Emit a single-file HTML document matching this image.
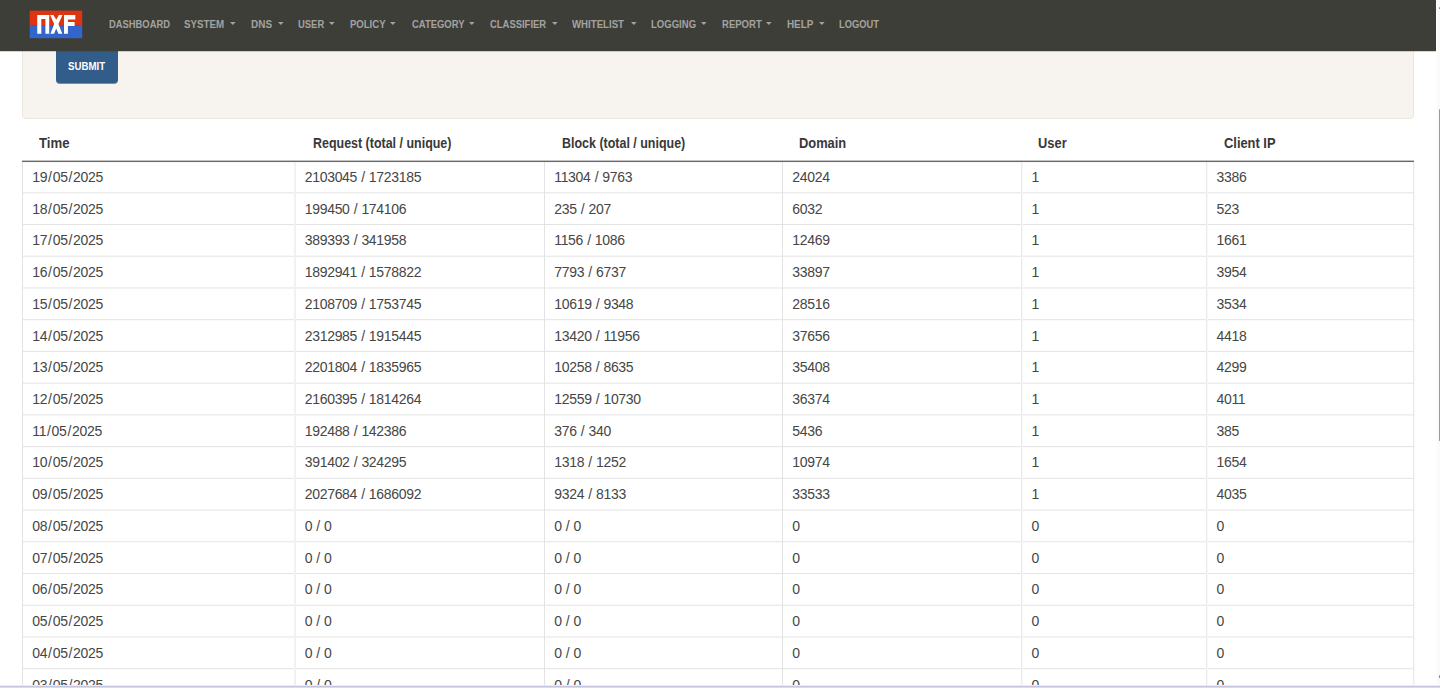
<!DOCTYPE html>
<html><head><meta charset="utf-8">
<style>
html,body{margin:0;padding:0;width:1440px;height:688px;overflow:hidden;background:#fff;}
body{position:relative;font-family:"Liberation Sans",sans-serif;}
.a{position:absolute;white-space:nowrap;}
.l{position:absolute;}
#nav{position:absolute;left:0;top:0;width:1436px;height:51px;background:#3e3e39;}
.ni{position:absolute;top:18.7px;font-size:10.2px;font-weight:bold;color:#a3a3a0;line-height:12px;transform-origin:0 0;}
.card{position:absolute;left:22px;top:0px;width:1392px;height:118.5px;background:#f7f4ef;border:1px solid #ebe6de;border-radius:4px;box-sizing:border-box;}
.btn{position:absolute;left:56px;top:0px;width:62px;height:83px;background:#325c89;border-radius:4px;box-shadow:0 1px 0 rgba(50,92,137,0.68);}
.btxt{position:absolute;font-size:10.5px;font-weight:bold;color:#fff;line-height:12px;transform-origin:0 0;}
.th{position:absolute;font-size:14px;font-weight:bold;color:#383838;line-height:16px;transform-origin:0 0;}
.td{position:absolute;font-size:14px;color:#464646;line-height:16px;letter-spacing:-0.3px;}
.s1{margin:0 0.95px;}
.s2{margin:0 0.5px;}
</style></head><body>

<div class="card"></div>
<div class="btn"></div>
<div class="a btxt" style="left:67.5px;top:60.0px;transform:scaleX(0.92)">SUBMIT</div>
<div class="a th" style="left:39px;top:135px;transform:scaleX(0.94)">Time</div>
<div class="a th" style="left:312.5px;top:135px;transform:scaleX(0.89)">Request (total / unique)</div>
<div class="a th" style="left:562px;top:135px;transform:scaleX(0.89)">Block (total / unique)</div>
<div class="a th" style="left:799.2px;top:135px;transform:scaleX(0.92)">Domain</div>
<div class="a th" style="left:1038.2px;top:135px;transform:scaleX(0.92)">User</div>
<div class="a th" style="left:1224.2px;top:135px;transform:scaleX(0.92)">Client IP</div>
<div class="l" style="left:22px;top:160px;width:1392px;height:1px;background:#c2c2c2"></div>
<div class="l" style="left:22px;top:161px;width:1392px;height:1px;background:#6b6b6b"></div>
<div class="l" style="left:22px;top:162px;width:1392px;height:1px;background:#f6f6f6"></div>
<div class="l" style="left:22px;top:192px;width:1392px;height:1px;background:#ebebeb"></div>
<div class="l" style="left:22px;top:193px;width:1392px;height:1px;background:#f7f7f7"></div>
<div class="l" style="left:22px;top:224px;width:1392px;height:1px;background:#e3e3e3"></div>
<div class="l" style="left:22px;top:255px;width:1392px;height:1px;background:#f7f7f7"></div>
<div class="l" style="left:22px;top:256px;width:1392px;height:1px;background:#ebebeb"></div>
<div class="l" style="left:22px;top:287px;width:1392px;height:1px;background:#f0f0f0"></div>
<div class="l" style="left:22px;top:288px;width:1392px;height:1px;background:#f2f2f2"></div>
<div class="l" style="left:22px;top:319px;width:1392px;height:1px;background:#e8e8e8"></div>
<div class="l" style="left:22px;top:320px;width:1392px;height:1px;background:#fafafa"></div>
<div class="l" style="left:22px;top:350px;width:1392px;height:1px;background:#fdfdfd"></div>
<div class="l" style="left:22px;top:351px;width:1392px;height:1px;background:#e5e5e5"></div>
<div class="l" style="left:22px;top:382px;width:1392px;height:1px;background:#f5f5f5"></div>
<div class="l" style="left:22px;top:383px;width:1392px;height:1px;background:#ededed"></div>
<div class="l" style="left:22px;top:414px;width:1392px;height:1px;background:#eeeeee"></div>
<div class="l" style="left:22px;top:415px;width:1392px;height:1px;background:#f4f4f4"></div>
<div class="l" style="left:22px;top:446px;width:1392px;height:1px;background:#e6e6e6"></div>
<div class="l" style="left:22px;top:447px;width:1392px;height:1px;background:#fcfcfc"></div>
<div class="l" style="left:22px;top:477px;width:1392px;height:1px;background:#fbfbfb"></div>
<div class="l" style="left:22px;top:478px;width:1392px;height:1px;background:#e7e7e7"></div>
<div class="l" style="left:22px;top:509px;width:1392px;height:1px;background:#f3f3f3"></div>
<div class="l" style="left:22px;top:510px;width:1392px;height:1px;background:#efefef"></div>
<div class="l" style="left:22px;top:541px;width:1392px;height:1px;background:#ebebeb"></div>
<div class="l" style="left:22px;top:542px;width:1392px;height:1px;background:#f7f7f7"></div>
<div class="l" style="left:22px;top:573px;width:1392px;height:1px;background:#e4e4e4"></div>
<div class="l" style="left:22px;top:574px;width:1392px;height:1px;background:#fefefe"></div>
<div class="l" style="left:22px;top:604px;width:1392px;height:1px;background:#f8f8f8"></div>
<div class="l" style="left:22px;top:605px;width:1392px;height:1px;background:#eaeaea"></div>
<div class="l" style="left:22px;top:636px;width:1392px;height:1px;background:#f1f1f1"></div>
<div class="l" style="left:22px;top:637px;width:1392px;height:1px;background:#f1f1f1"></div>
<div class="l" style="left:22px;top:668px;width:1392px;height:1px;background:#e9e9e9"></div>
<div class="l" style="left:22px;top:669px;width:1392px;height:1px;background:#f9f9f9"></div>
<div class="l" style="left:22px;top:699px;width:1392px;height:1px;background:#fefefe"></div>
<div class="l" style="left:22px;top:700px;width:1392px;height:1px;background:#e4e4e4"></div>
<div class="l" style="left:22px;top:162px;width:1px;height:526px;background:#e3e3e3"></div>
<div class="l" style="left:294px;top:162px;width:1px;height:526px;background:#f1f1f1"></div>
<div class="l" style="left:295px;top:162px;width:1px;height:526px;background:#f1f1f1"></div>
<div class="l" style="left:544px;top:162px;width:1px;height:526px;background:#e3e3e3"></div>
<div class="l" style="left:782px;top:162px;width:1px;height:526px;background:#e3e3e3"></div>
<div class="l" style="left:1021px;top:162px;width:1px;height:526px;background:#ebebeb"></div>
<div class="l" style="left:1022px;top:162px;width:1px;height:526px;background:#f7f7f7"></div>
<div class="l" style="left:1206px;top:162px;width:1px;height:526px;background:#eaeaea"></div>
<div class="l" style="left:1207px;top:162px;width:1px;height:526px;background:#f8f8f8"></div>
<div class="l" style="left:1413px;top:162px;width:1px;height:526px;background:#eaeaea"></div>
<div class="l" style="left:1414px;top:162px;width:1px;height:526px;background:#f8f8f8"></div>
<div class="a td" style="left:32.20px;top:168.87px">19<span class="s1">/</span>05<span class="s1">/</span>2025</div>
<div class="a td" style="left:304.70px;top:168.87px">2103045 <span class="s2">/</span> 1723185</div>
<div class="a td" style="left:554.20px;top:168.87px">11304 <span class="s2">/</span> 9763</div>
<div class="a td" style="left:792.20px;top:168.87px">24024</div>
<div class="a td" style="left:1031.50px;top:168.87px">1</div>
<div class="a td" style="left:1216.45px;top:168.87px">3386</div>
<div class="a td" style="left:32.20px;top:200.60px">18<span class="s1">/</span>05<span class="s1">/</span>2025</div>
<div class="a td" style="left:304.70px;top:200.60px">199450 <span class="s2">/</span> 174106</div>
<div class="a td" style="left:554.20px;top:200.60px">235 <span class="s2">/</span> 207</div>
<div class="a td" style="left:792.20px;top:200.60px">6032</div>
<div class="a td" style="left:1031.50px;top:200.60px">1</div>
<div class="a td" style="left:1216.45px;top:200.60px">523</div>
<div class="a td" style="left:32.20px;top:232.33px">17<span class="s1">/</span>05<span class="s1">/</span>2025</div>
<div class="a td" style="left:304.70px;top:232.33px">389393 <span class="s2">/</span> 341958</div>
<div class="a td" style="left:554.20px;top:232.33px">1156 <span class="s2">/</span> 1086</div>
<div class="a td" style="left:792.20px;top:232.33px">12469</div>
<div class="a td" style="left:1031.50px;top:232.33px">1</div>
<div class="a td" style="left:1216.45px;top:232.33px">1661</div>
<div class="a td" style="left:32.20px;top:264.06px">16<span class="s1">/</span>05<span class="s1">/</span>2025</div>
<div class="a td" style="left:304.70px;top:264.06px">1892941 <span class="s2">/</span> 1578822</div>
<div class="a td" style="left:554.20px;top:264.06px">7793 <span class="s2">/</span> 6737</div>
<div class="a td" style="left:792.20px;top:264.06px">33897</div>
<div class="a td" style="left:1031.50px;top:264.06px">1</div>
<div class="a td" style="left:1216.45px;top:264.06px">3954</div>
<div class="a td" style="left:32.20px;top:295.79px">15<span class="s1">/</span>05<span class="s1">/</span>2025</div>
<div class="a td" style="left:304.70px;top:295.79px">2108709 <span class="s2">/</span> 1753745</div>
<div class="a td" style="left:554.20px;top:295.79px">10619 <span class="s2">/</span> 9348</div>
<div class="a td" style="left:792.20px;top:295.79px">28516</div>
<div class="a td" style="left:1031.50px;top:295.79px">1</div>
<div class="a td" style="left:1216.45px;top:295.79px">3534</div>
<div class="a td" style="left:32.20px;top:327.52px">14<span class="s1">/</span>05<span class="s1">/</span>2025</div>
<div class="a td" style="left:304.70px;top:327.52px">2312985 <span class="s2">/</span> 1915445</div>
<div class="a td" style="left:554.20px;top:327.52px">13420 <span class="s2">/</span> 11956</div>
<div class="a td" style="left:792.20px;top:327.52px">37656</div>
<div class="a td" style="left:1031.50px;top:327.52px">1</div>
<div class="a td" style="left:1216.45px;top:327.52px">4418</div>
<div class="a td" style="left:32.20px;top:359.25px">13<span class="s1">/</span>05<span class="s1">/</span>2025</div>
<div class="a td" style="left:304.70px;top:359.25px">2201804 <span class="s2">/</span> 1835965</div>
<div class="a td" style="left:554.20px;top:359.25px">10258 <span class="s2">/</span> 8635</div>
<div class="a td" style="left:792.20px;top:359.25px">35408</div>
<div class="a td" style="left:1031.50px;top:359.25px">1</div>
<div class="a td" style="left:1216.45px;top:359.25px">4299</div>
<div class="a td" style="left:32.20px;top:390.98px">12<span class="s1">/</span>05<span class="s1">/</span>2025</div>
<div class="a td" style="left:304.70px;top:390.98px">2160395 <span class="s2">/</span> 1814264</div>
<div class="a td" style="left:554.20px;top:390.98px">12559 <span class="s2">/</span> 10730</div>
<div class="a td" style="left:792.20px;top:390.98px">36374</div>
<div class="a td" style="left:1031.50px;top:390.98px">1</div>
<div class="a td" style="left:1216.45px;top:390.98px">4011</div>
<div class="a td" style="left:32.20px;top:422.71px">11<span class="s1">/</span>05<span class="s1">/</span>2025</div>
<div class="a td" style="left:304.70px;top:422.71px">192488 <span class="s2">/</span> 142386</div>
<div class="a td" style="left:554.20px;top:422.71px">376 <span class="s2">/</span> 340</div>
<div class="a td" style="left:792.20px;top:422.71px">5436</div>
<div class="a td" style="left:1031.50px;top:422.71px">1</div>
<div class="a td" style="left:1216.45px;top:422.71px">385</div>
<div class="a td" style="left:32.20px;top:454.44px">10<span class="s1">/</span>05<span class="s1">/</span>2025</div>
<div class="a td" style="left:304.70px;top:454.44px">391402 <span class="s2">/</span> 324295</div>
<div class="a td" style="left:554.20px;top:454.44px">1318 <span class="s2">/</span> 1252</div>
<div class="a td" style="left:792.20px;top:454.44px">10974</div>
<div class="a td" style="left:1031.50px;top:454.44px">1</div>
<div class="a td" style="left:1216.45px;top:454.44px">1654</div>
<div class="a td" style="left:32.20px;top:486.17px">09<span class="s1">/</span>05<span class="s1">/</span>2025</div>
<div class="a td" style="left:304.70px;top:486.17px">2027684 <span class="s2">/</span> 1686092</div>
<div class="a td" style="left:554.20px;top:486.17px">9324 <span class="s2">/</span> 8133</div>
<div class="a td" style="left:792.20px;top:486.17px">33533</div>
<div class="a td" style="left:1031.50px;top:486.17px">1</div>
<div class="a td" style="left:1216.45px;top:486.17px">4035</div>
<div class="a td" style="left:32.20px;top:517.90px">08<span class="s1">/</span>05<span class="s1">/</span>2025</div>
<div class="a td" style="left:304.70px;top:517.90px">0 <span class="s2">/</span> 0</div>
<div class="a td" style="left:554.20px;top:517.90px">0 <span class="s2">/</span> 0</div>
<div class="a td" style="left:792.20px;top:517.90px">0</div>
<div class="a td" style="left:1031.50px;top:517.90px">0</div>
<div class="a td" style="left:1216.45px;top:517.90px">0</div>
<div class="a td" style="left:32.20px;top:549.63px">07<span class="s1">/</span>05<span class="s1">/</span>2025</div>
<div class="a td" style="left:304.70px;top:549.63px">0 <span class="s2">/</span> 0</div>
<div class="a td" style="left:554.20px;top:549.63px">0 <span class="s2">/</span> 0</div>
<div class="a td" style="left:792.20px;top:549.63px">0</div>
<div class="a td" style="left:1031.50px;top:549.63px">0</div>
<div class="a td" style="left:1216.45px;top:549.63px">0</div>
<div class="a td" style="left:32.20px;top:581.36px">06<span class="s1">/</span>05<span class="s1">/</span>2025</div>
<div class="a td" style="left:304.70px;top:581.36px">0 <span class="s2">/</span> 0</div>
<div class="a td" style="left:554.20px;top:581.36px">0 <span class="s2">/</span> 0</div>
<div class="a td" style="left:792.20px;top:581.36px">0</div>
<div class="a td" style="left:1031.50px;top:581.36px">0</div>
<div class="a td" style="left:1216.45px;top:581.36px">0</div>
<div class="a td" style="left:32.20px;top:613.09px">05<span class="s1">/</span>05<span class="s1">/</span>2025</div>
<div class="a td" style="left:304.70px;top:613.09px">0 <span class="s2">/</span> 0</div>
<div class="a td" style="left:554.20px;top:613.09px">0 <span class="s2">/</span> 0</div>
<div class="a td" style="left:792.20px;top:613.09px">0</div>
<div class="a td" style="left:1031.50px;top:613.09px">0</div>
<div class="a td" style="left:1216.45px;top:613.09px">0</div>
<div class="a td" style="left:32.20px;top:644.82px">04<span class="s1">/</span>05<span class="s1">/</span>2025</div>
<div class="a td" style="left:304.70px;top:644.82px">0 <span class="s2">/</span> 0</div>
<div class="a td" style="left:554.20px;top:644.82px">0 <span class="s2">/</span> 0</div>
<div class="a td" style="left:792.20px;top:644.82px">0</div>
<div class="a td" style="left:1031.50px;top:644.82px">0</div>
<div class="a td" style="left:1216.45px;top:644.82px">0</div>
<div class="a td" style="left:32.20px;top:676.55px">03<span class="s1">/</span>05<span class="s1">/</span>2025</div>
<div class="a td" style="left:304.70px;top:676.55px">0 <span class="s2">/</span> 0</div>
<div class="a td" style="left:554.20px;top:676.55px">0 <span class="s2">/</span> 0</div>
<div class="a td" style="left:792.20px;top:676.55px">0</div>
<div class="a td" style="left:1031.50px;top:676.55px">0</div>
<div class="a td" style="left:1216.45px;top:676.55px">0</div>
<div id="nav">
<svg class="a" style="left:0;top:0" width="100" height="51" viewBox="0 0 100 51"><rect x="29.7" y="10.6" width="52.5" height="14.7" fill="#dd3512"/><rect x="29.7" y="25.3" width="52.5" height="12.9" fill="#3366cc"/><path fill="#fff" d="M37.25 14.9H49.2V33.8H45.4V18.9H41.3V33.8H37.25Z M50.1 15H53.4L56.3 19.8L58.9 15H62.5L58.4 24.1L62.3 33.7H58.4L56.2 28.4L54.1 33.7H50.4L54.2 24.1Z M64 15H75.3V19.6H67.9V22.1H74.6V26H67.9V33.8H64Z"/></svg>
<div class="a ni" style="left:108.6px;transform:scaleX(0.9213)">DASHBOARD</div>
<div class="a ni" style="left:184.3px;transform:scaleX(0.9574)">SYSTEM</div>
<svg class="a" style="left:230.2px;top:21.7px" width="7" height="4" viewBox="0 0 7 4"><path d="M0 0H5.6L2.8 3Z" fill="#a3a3a0"/></svg>
<div class="a ni" style="left:251.0px;transform:scaleX(0.9779)">DNS</div>
<svg class="a" style="left:277.5px;top:21.7px" width="7" height="4" viewBox="0 0 7 4"><path d="M0 0H5.6L2.8 3Z" fill="#a3a3a0"/></svg>
<div class="a ni" style="left:297.7px;transform:scaleX(0.9265)">USER</div>
<svg class="a" style="left:328.6px;top:21.7px" width="7" height="4" viewBox="0 0 7 4"><path d="M0 0H5.6L2.8 3Z" fill="#a3a3a0"/></svg>
<div class="a ni" style="left:350.0px;transform:scaleX(0.9368)">POLICY</div>
<svg class="a" style="left:390.4px;top:21.7px" width="7" height="4" viewBox="0 0 7 4"><path d="M0 0H5.6L2.8 3Z" fill="#a3a3a0"/></svg>
<div class="a ni" style="left:411.5px;transform:scaleX(0.9265)">CATEGORY</div>
<svg class="a" style="left:468.9px;top:21.7px" width="7" height="4" viewBox="0 0 7 4"><path d="M0 0H5.6L2.8 3Z" fill="#a3a3a0"/></svg>
<div class="a ni" style="left:490.0px;transform:scaleX(0.9265)">CLASSIFIER</div>
<svg class="a" style="left:551.6px;top:21.7px" width="7" height="4" viewBox="0 0 7 4"><path d="M0 0H5.6L2.8 3Z" fill="#a3a3a0"/></svg>
<div class="a ni" style="left:572.4px;transform:scaleX(0.9471)">WHITELIST</div>
<svg class="a" style="left:630.8px;top:21.7px" width="7" height="4" viewBox="0 0 7 4"><path d="M0 0H5.6L2.8 3Z" fill="#a3a3a0"/></svg>
<div class="a ni" style="left:651.3px;transform:scaleX(0.9368)">LOGGING</div>
<svg class="a" style="left:701.1px;top:21.7px" width="7" height="4" viewBox="0 0 7 4"><path d="M0 0H5.6L2.8 3Z" fill="#a3a3a0"/></svg>
<div class="a ni" style="left:721.8px;transform:scaleX(0.9368)">REPORT</div>
<svg class="a" style="left:766.1px;top:21.7px" width="7" height="4" viewBox="0 0 7 4"><path d="M0 0H5.6L2.8 3Z" fill="#a3a3a0"/></svg>
<div class="a ni" style="left:786.8px;transform:scaleX(0.9676)">HELP</div>
<svg class="a" style="left:818.5px;top:21.7px" width="7" height="4" viewBox="0 0 7 4"><path d="M0 0H5.6L2.8 3Z" fill="#a3a3a0"/></svg>
<div class="a ni" style="left:838.8px;transform:scaleX(0.9162)">LOGOUT</div>
</div>
<div class="l" style="left:0;top:51px;width:1436px;height:1px;background:rgba(62,62,57,0.22)"></div>
<div class="a" style="left:1436.8px;top:0;width:3.2000000000000455px;height:688px;background:#fafafa"></div>
<div class="a" style="left:1438.8px;top:109.2px;width:1.2px;height:332px;background:#9a9a9a;border-radius:1px"></div>
<div class="l" style="left:0;top:685px;width:1440px;height:1px;background:#ececec"></div>
<div class="l" style="left:0;top:686px;width:1440px;height:1px;background:#c5c5df"></div>
<div class="l" style="left:0;top:687px;width:1440px;height:1px;background:#dadaf7"></div>
<div class="l" style="left:1438.6px;top:6.8px;width:1.6px;height:2.6px;background:#8a8a8a;border-radius:1px"></div>
<div class="l" style="left:1438.6px;top:675.4px;width:1.6px;height:2.6px;background:#8a8a8a;border-radius:1px"></div>
</body></html>
